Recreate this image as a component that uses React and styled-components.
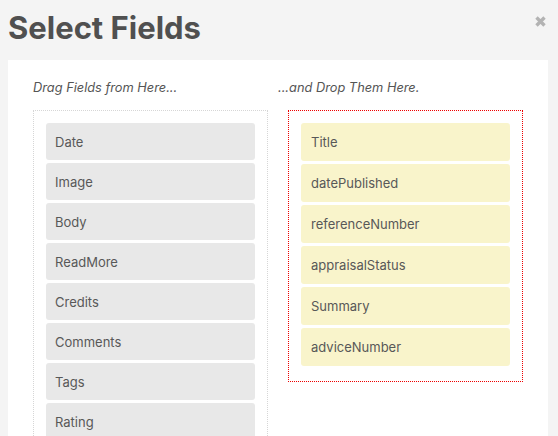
import React from "react";
import styled, { createGlobalStyle } from "styled-components";

const Global = createGlobalStyle`
  html, body { margin: 0; padding: 0; background: #f4f4f4; overflow: hidden; }
  body { font-family: Inter, "Noto Sans", sans-serif; color: #555; }
`;

const Page = styled.div`
  width: 558px;
  height: 436px;
  display: flex;
  flex-direction: column;
  overflow: hidden;
`;

const Header = styled.div`
  height: 60px;
  flex-shrink: 0;
  display: flex;
  justify-content: space-between;
  align-items: flex-start;
  padding: 0 11px 0 8px;
  box-sizing: border-box;
`;

const Title = styled.h1`
  margin: 10px 0 0;
  font-size: 31px;
  line-height: 36px;
  font-weight: 700;
  color: #505050;
`;

const Close = styled.button`
  margin-top: 15px;
  padding: 0;
  border: none;
  background: none;
  width: 13px;
  height: 13px;
  display: flex;
  cursor: pointer;
`;

const Panel = styled.div`
  margin: 0 10px 0 8px;
  background: #fff;
  flex: 1 0 auto;
  padding: 20px 25px 0;
  display: grid;
  grid-template-columns: 235px 235px;
  column-gap: 20px;
  align-content: start;
  align-items: start;
`;

const Column = styled.div`
  display: flex;
  flex-direction: column;
`;

const Label = styled.div`
  font-size: 12.8px;
  line-height: 16px;
  font-style: italic;
  color: #555;
  margin: 0 0 14px ${(p) => (p.$drop ? "-10px" : "0")};
`;

const Box = styled.div`
  border: 1px dotted ${(p) => (p.$drop ? "#e00" : "#d6d6d6")};
  padding: 12px 12px 12px;
  display: flex;
  flex-direction: column;
`;

const Item = styled.div`
  height: ${(p) => (p.$drop ? 38 : 37)}px;
  margin-bottom: 3px;
  border-radius: 3px;
  background: ${(p) => (p.$drop ? "#f9f4cb" : "#e8e8e8")};
  display: flex;
  align-items: center;
  padding-left: ${(p) => (p.$drop ? 10 : 9)}px;
  font-size: 13px;
  color: #585858;
`;

const source = ["Date", "Image", "Body", "ReadMore", "Credits", "Comments", "Tags", "Rating"];
const target = ["Title", "datePublished", "referenceNumber", "appraisalStatus", "Summary", "adviceNumber"];

export default function App() {
  return (
    <Page>
      <Global />
      <Header>
        <Title>Select Fields</Title>
        <Close aria-label="Close">
          <svg width="13" height="13" viewBox="0 0 13 13">
            <path d="M2.5 2.5 L10.5 10.5 M10.5 2.5 L2.5 10.5" stroke="#b3b3b3" strokeWidth="3.4" strokeLinecap="butt" />
          </svg>
        </Close>
      </Header>
      <Panel>
        <Column>
          <Label>Drag Fields from Here...</Label>
          <Box>
            {source.map((s) => (
              <Item key={s}>{s}</Item>
            ))}
          </Box>
        </Column>
        <Column>
          <Label $drop>...and Drop Them Here.</Label>
          <Box $drop>
            {target.map((s) => (
              <Item key={s} $drop>
                {s}
              </Item>
            ))}
          </Box>
        </Column>
      </Panel>
    </Page>
  );
}
